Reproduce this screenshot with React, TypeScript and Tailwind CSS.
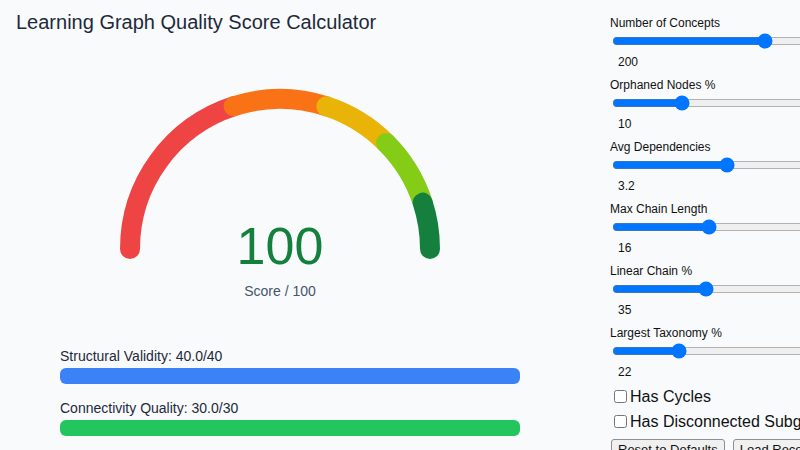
import { useState } from 'react';

const CX = 170;
const CY = 169;
const R = 150;

// gauge bands, angles in degrees (180 = left end, 0 = right end)
const bands = [
  { from: 180, to: 108, color: '#ef4444' },
  { from: 108, to: 72, color: '#f97316' },
  { from: 72, to: 45, color: '#eab308' },
  { from: 45, to: 18, color: '#84cc16' },
  { from: 18, to: 0, color: '#15803d' },
];

function pt(deg: number) {
  const a = (deg * Math.PI) / 180;
  return [CX + R * Math.cos(a), CY - R * Math.sin(a)];
}

function arc(from: number, to: number) {
  const [x1, y1] = pt(from);
  const [x2, y2] = pt(to);
  return `M ${x1} ${y1} A ${R} ${R} 0 0 1 ${x2} ${y2}`;
}

const initialSliders = [
  { key: 'concepts', label: 'Number of Concepts', min: 20, max: 310, step: 1, value: 200 },
  { key: 'orphans', label: 'Orphaned Nodes %', min: 0, max: 38, step: 1, value: 10 },
  { key: 'deps', label: 'Avg Dependencies', min: 0, max: 7, step: 0.1, value: 3.2 },
  { key: 'chain', label: 'Max Chain Length', min: 0, max: 42, step: 1, value: 16 },
  { key: 'linear', label: 'Linear Chain %', min: 0, max: 95, step: 1, value: 35 },
  { key: 'taxonomy', label: 'Largest Taxonomy %', min: 0, max: 87, step: 1, value: 22 },
];

function Gauge({ score }: { score: number }) {
  return (
    <div className="relative mx-auto mt-11 h-[221px] w-[340px]">
      <svg width="340" height="180" viewBox="0 0 340 180">
        {bands.map((b) => (
          <path
            key={b.color}
            d={arc(b.from, b.to)}
            fill="none"
            stroke={b.color}
            strokeWidth="20"
            strokeLinecap="round"
          />
        ))}
      </svg>
      <div className="absolute inset-x-0 top-[140px] flex flex-col items-center">
        <div className="text-[52px] leading-none text-[#15803d]">{score}</div>
        <div className="mt-[9px] text-sm leading-5 text-[#475569]">Score / 100</div>
      </div>
    </div>
  );
}

function Bar({ label, color }: { label: string; color: string }) {
  return (
    <div className="mb-3.5">
      <div className="text-sm leading-5 text-[#1e293b]">{label}</div>
      <div className="mt-0.5 h-4 w-full rounded-md bg-[#e2e8f0]">
        <div className={`h-4 w-full rounded-md ${color}`} />
      </div>
    </div>
  );
}

export default function App() {
  const [sliders, setSliders] = useState(initialSliders);
  const [cycles, setCycles] = useState(false);
  const [disconnected, setDisconnected] = useState(false);

  return (
    <div className="flex h-screen w-screen overflow-hidden bg-[#f8fafc] font-['Liberation_Sans',Arial,sans-serif]">
      <div className="w-[560px] shrink-0 px-4 pt-2">
        <h1 className="text-xl leading-7 text-[#1e293b]">Learning Graph Quality Score Calculator</h1>
        <Gauge score={100} />
        <div className="mt-[45px] ml-11 w-[460px]">
          <Bar label="Structural Validity: 40.0/40" color="bg-[#3b82f6]" />
          <Bar label="Connectivity Quality: 30.0/30" color="bg-[#22c55e]" />
        </div>
      </div>

      <div className="ml-[50px] w-[260px] shrink-0 pt-[15px] text-[#111]">
        {sliders.map((s, i) => (
          <div key={s.key} className="mb-[7px]">
            <div className="text-xs leading-4">{s.label}</div>
            <input
              type="range"
              min={s.min}
              max={s.max}
              step={s.step}
              value={s.value}
              onChange={(e) => {
                const next = [...sliders];
                next[i] = { ...s, value: Number(e.target.value) };
                setSliders(next);
              }}
              className="mt-0.5 ml-0.5 block h-4 w-[250px]"
            />
            <div className="mt-[5px] ml-2 text-xs leading-4">{s.value}</div>
          </div>
        ))}

        <label className="mt-[7px] flex h-[19px] items-center text-base">
          <input
            type="checkbox"
            checked={cycles}
            onChange={(e) => setCycles(e.target.checked)}
            className="mr-[3px] ml-1 h-[13px] w-[13px]"
          />
          Has Cycles
        </label>
        <label className="mt-[6px] flex h-[19px] items-center whitespace-nowrap text-base">
          <input
            type="checkbox"
            checked={disconnected}
            onChange={(e) => setDisconnected(e.target.checked)}
            className="mr-[3px] ml-1 h-[13px] w-[13px]"
          />
          Has Disconnected Subgraphs
        </label>
        <div className="mt-2 flex gap-2 whitespace-nowrap pl-px">
          <button className="rounded-[3px] border border-[#8f8f8f] bg-[#f0f0f0] px-1.5 py-px text-[13px] leading-[17px]">
            Reset to Defaults
          </button>
          <button className="rounded-[3px] border border-[#8f8f8f] bg-[#f0f0f0] px-1.5 py-px text-[13px] leading-[17px]">
            Load Recommended
          </button>
        </div>
      </div>
    </div>
  );
}
